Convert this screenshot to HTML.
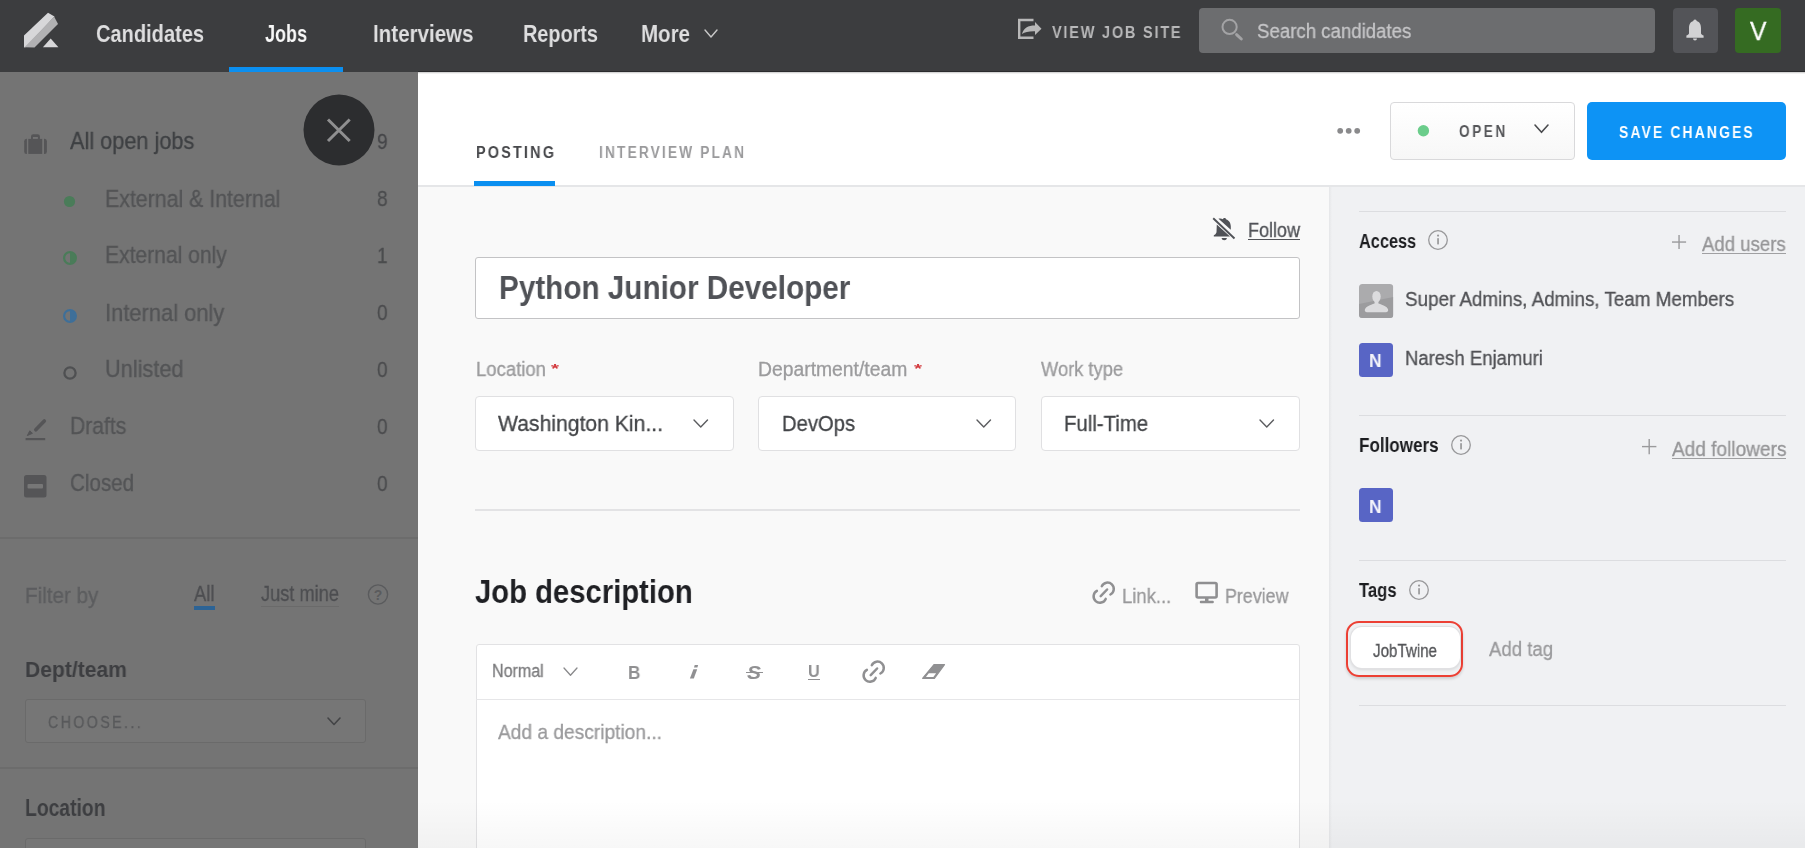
<!DOCTYPE html>
<html><head><meta charset="utf-8"><title>Lever</title>
<style>
html,body{margin:0;padding:0;width:1810px;height:848px;overflow:hidden;background:#fff;}
body{position:relative;font-family:"Liberation Sans",sans-serif;}
.t{position:absolute;white-space:nowrap;line-height:1;transform-origin:0 0;will-change:transform;}
.r{position:absolute;}
svg.r{overflow:visible;}
</style></head><body>
<div class="r" style="left:0px;top:0px;width:1810px;height:848px;background:#ffffff;"></div>
<div class="r" style="left:418px;top:187px;width:911px;height:661px;background:#f9f9f9;"></div>
<div class="r" style="left:1329px;top:187px;width:476px;height:661px;background:#f0f1f3;"></div>
<div class="r" style="left:1329px;top:187px;width:3px;height:661px;background:linear-gradient(to right,#e5e6e8,#f0f1f3);"></div>
<div class="r" style="left:418px;top:185px;width:1387px;height:2px;background:#e5e6e8;"></div>
<div class="r" style="left:0px;top:72px;width:417.5px;height:776px;background:#747474;"></div>
<div class="r" style="left:0px;top:0px;width:1805px;height:72px;background:#3c3d3f;"></div>
<div class="r" style="left:418px;top:71px;width:1387px;height:1px;background:#2a2b2d;"></div>
<div class="r" style="left:417.5px;top:72px;width:1387.5px;height:2px;background:linear-gradient(rgba(0,0,0,0.22),rgba(0,0,0,0));"></div>
<svg class="r" style="left:20px;top:8px;" width="44" height="44" viewBox="0 0 44 44">
<polygon points="4,39.5 4,27.5 28,4.8 34.5,8.5 6,39" fill="#d7d7d9"/>
<polygon points="34.2,8.7 38,16 14.5,39.5 4.5,39.2" fill="#b1b1b3"/>
<polygon points="30.7,30.4 22.9,39.3 38.4,39.3" fill="#d7d7d9"/>
</svg>
<div class="t" id="t0" style="left:95.5px;top:21.7px;font-size:24.71px;color:#dededf;font-weight:700;transform:scaleX(0.8111);">Candidates</div>
<div class="t" id="t1" style="left:265.0px;top:21.7px;font-size:24.71px;color:#f7f7f7;font-weight:700;transform:scaleX(0.7283);">Jobs</div>
<div class="t" id="t2" style="left:373.0px;top:21.7px;font-size:24.71px;color:#dededf;font-weight:700;transform:scaleX(0.8318);">Interviews</div>
<div class="t" id="t3" style="left:522.8px;top:21.7px;font-size:24.71px;color:#dededf;font-weight:700;transform:scaleX(0.8035);">Reports</div>
<div class="t" id="t4" style="left:640.6px;top:21.7px;font-size:24.71px;color:#dededf;font-weight:700;transform:scaleX(0.8301);">More</div>
<svg class="r" style="left:703px;top:27.5px;" width="16" height="11.0" viewBox="0 0 16 11.0"><polyline points="2,2 8.0,9.0 14,2" fill="none" stroke="#c8c8c8" stroke-width="1.4" stroke-linecap="round" stroke-linejoin="round"/></svg>
<div class="r" style="left:229px;top:67px;width:114px;height:5px;background:#0b8ff0;"></div>
<svg class="r" style="left:1016px;top:16px;" width="28" height="26" viewBox="0 0 28 26">
<path d="M17.5,4 H3.2 V21.8 H17.5" fill="none" stroke="#b8b8b8" stroke-width="2.4"/>
<path d="M6,18 C7.5,12 12,9.5 19,9.5 V6 L25.5,12.7 L19,19 V15.2 C13,15 9,16 6,18 Z" fill="#b8b8b8"/>
</svg>
<div class="t" id="t5" style="left:1052.0px;top:24.1px;font-size:16.28px;color:#b9b9ba;font-weight:700;letter-spacing:2px;transform:scaleX(0.8917);">VIEW JOB SITE</div>
<div class="r" style="left:1199px;top:8px;width:456px;height:45px;background:#6c6d6f;border-radius:4px;"></div>
<svg class="r" style="left:1218px;top:15px;" width="30" height="28" viewBox="0 0 30 28"><circle cx="11.6" cy="11.9" r="7.1" fill="none" stroke="#a3a3a5" stroke-width="2"/><line x1="18.6" y1="19.6" x2="23.3" y2="24" stroke="#a3a3a5" stroke-width="3" stroke-linecap="round"/></svg>
<div class="t" id="t6" style="left:1256.6px;top:21.7px;font-size:19.77px;color:#c6c6c8;font-weight:400;-webkit-text-stroke:0.3px #c6c6c8;transform:scaleX(0.9430);">Search candidates</div>
<div class="r" style="left:1673px;top:8px;width:45px;height:45px;background:#535458;border-radius:4px;"></div>
<svg class="r" style="left:1684px;top:18px;" width="22" height="24" viewBox="0 0 22 24"><path d="M11,1.5 C12.3,1.5 12.6,2.5 12.6,3 C16,4 17,7 17,10 V15.5 C17.5,16.5 18.5,17.2 19.6,17.6 V19.8 H2.4 V17.6 C3.5,17.2 4.5,16.5 5,15.5 V10 C5,7 6,4 9.4,3 C9.4,2.5 9.7,1.5 11,1.5 Z" fill="#d2d2d4"/><path d="M9,20.5 A2,2 0 0 0 13,20.5 Z" fill="#d2d2d4"/></svg>
<div class="r" style="left:1735px;top:8px;width:46px;height:45px;background:#356b22;border-radius:4px;"></div>
<div class="t" id="t7" style="left:1749.5px;top:18.0px;font-size:26.16px;color:#ffffff;font-weight:400;-webkit-text-stroke:0.3px #ffffff;transform:scaleX(0.9454);">V</div>
<svg class="r" style="left:18px;top:125px;" width="36" height="35" viewBox="0 0 36 35"><path d="M8.9,13.8 V28.9 H8.5 Q6.2,28.9 6.2,26.4 V16.3 Q6.2,13.8 8.5,13.8 Z" fill="#555557"/><rect x="10.3" y="13.9" width="13.9" height="15" fill="#555557"/><path d="M26,13.8 H26.6 Q28.9,13.8 28.9,16.3 V26.4 Q28.9,28.9 26.6,28.9 H26 Z" fill="#555557"/><path d="M13,14 V11.5 Q13,9.3 15.2,9.3 H19.7 Q21.9,9.3 21.9,11.5 V14 H19.9 V12 H14.9 V14 Z" fill="#555557"/></svg>
<div class="t" id="t8" style="left:69.7px;top:130.3px;font-size:23.26px;color:#3e4043;font-weight:400;-webkit-text-stroke:0.3px #3e4043;transform:scaleX(0.9336);">All open jobs</div>
<div class="t" id="t9" style="left:377.3px;top:130.9px;font-size:22.53px;color:#454649;font-weight:400;-webkit-text-stroke:0.3px #454649;transform:scaleX(0.8459);">9</div>
<div class="t" id="t10" style="left:105.0px;top:187.6px;font-size:23.26px;color:#535456;font-weight:400;-webkit-text-stroke:0.3px #535456;transform:scaleX(0.9170);">External &amp; Internal</div>
<div class="t" id="t11" style="left:377.3px;top:188.2px;font-size:22.53px;color:#4b4c4e;font-weight:400;-webkit-text-stroke:0.3px #4b4c4e;transform:scaleX(0.8459);">8</div>
<div class="t" id="t12" style="left:105.0px;top:243.9px;font-size:23.26px;color:#535456;font-weight:400;-webkit-text-stroke:0.3px #535456;transform:scaleX(0.9062);">External only</div>
<div class="t" id="t13" style="left:377.3px;top:244.5px;font-size:22.53px;color:#4b4c4e;font-weight:400;-webkit-text-stroke:0.3px #4b4c4e;transform:scaleX(0.8459);">1</div>
<div class="t" id="t14" style="left:105.0px;top:301.7px;font-size:23.26px;color:#535456;font-weight:400;-webkit-text-stroke:0.3px #535456;transform:scaleX(0.9418);">Internal only</div>
<div class="t" id="t15" style="left:377.3px;top:302.3px;font-size:22.53px;color:#4b4c4e;font-weight:400;-webkit-text-stroke:0.3px #4b4c4e;transform:scaleX(0.8459);">0</div>
<div class="t" id="t16" style="left:105.0px;top:358.1px;font-size:23.26px;color:#535456;font-weight:400;-webkit-text-stroke:0.3px #535456;transform:scaleX(0.9345);">Unlisted</div>
<div class="t" id="t17" style="left:377.3px;top:358.7px;font-size:22.53px;color:#4b4c4e;font-weight:400;-webkit-text-stroke:0.3px #4b4c4e;transform:scaleX(0.8459);">0</div>
<svg class="r" style="left:62px;top:194px;" width="15" height="15" viewBox="0 0 15 15"><circle cx="7.5" cy="7.5" r="5.6" fill="#4a7c59"/></svg>
<svg class="r" style="left:62px;top:250px;" width="16" height="16" viewBox="0 0 16 16"><circle cx="8" cy="8" r="5.9" fill="none" stroke="#4a7c59" stroke-width="2.2"/><path d="M8,2.1 A5.9,5.9 0 0 1 8,13.9 Z" fill="#4a7c59"/></svg>
<svg class="r" style="left:62px;top:308px;" width="16" height="16" viewBox="0 0 16 16"><circle cx="8" cy="8" r="5.9" fill="none" stroke="#3e6f99" stroke-width="2.2"/><path d="M8,2.1 A5.9,5.9 0 0 1 8,13.9 Z" fill="#3e6f99"/><circle cx="8" cy="8" r="3" fill="#3e6f99" opacity="0"/></svg>
<svg class="r" style="left:62px;top:365px;" width="16" height="16" viewBox="0 0 16 16"><circle cx="8" cy="8" r="5.6" fill="none" stroke="#4f5052" stroke-width="2.3"/></svg>
<div class="t" id="t18" style="left:70.3px;top:415.1px;font-size:23.26px;color:#535456;font-weight:400;-webkit-text-stroke:0.3px #535456;transform:scaleX(0.9062);">Drafts</div>
<div class="t" id="t19" style="left:377.3px;top:415.7px;font-size:22.53px;color:#4b4c4e;font-weight:400;-webkit-text-stroke:0.3px #4b4c4e;transform:scaleX(0.8459);">0</div>
<svg class="r" style="left:23px;top:417px;" width="26" height="25" viewBox="0 0 26 25"><line x1="21.3" y1="4" x2="12.8" y2="12.8" stroke="#555557" stroke-width="3.6" stroke-linecap="round"/><polygon points="4.3,18.6 6.8,13.8 9.4,16.3" fill="#555557" stroke="#555557" stroke-width="1" stroke-linejoin="round"/><rect x="2.6" y="21" width="19.6" height="2.2" fill="#555557"/></svg>
<div class="t" id="t20" style="left:70.3px;top:472.1px;font-size:23.26px;color:#535456;font-weight:400;-webkit-text-stroke:0.3px #535456;transform:scaleX(0.8843);">Closed</div>
<div class="t" id="t21" style="left:377.3px;top:472.7px;font-size:22.53px;color:#4b4c4e;font-weight:400;-webkit-text-stroke:0.3px #4b4c4e;transform:scaleX(0.8459);">0</div>
<svg class="r" style="left:23px;top:474px;" width="25" height="24" viewBox="0 0 25 24"><rect x="1" y="1" width="22.5" height="22.5" rx="2.5" fill="#555557"/><rect x="4.5" y="10" width="15.5" height="4.5" rx="1" fill="#777"/></svg>
<div class="r" style="left:0px;top:537px;width:418px;height:1.5px;background:#6c6c6c;"></div>
<div class="t" id="t22" style="left:25.0px;top:585.2px;font-size:22.53px;color:#5c5d5f;font-weight:400;-webkit-text-stroke:0.3px #5c5d5f;transform:scaleX(0.9166);">Filter by</div>
<div class="t" id="t23" style="left:193.9px;top:582.9px;font-size:22.53px;color:#4d4e51;font-weight:400;-webkit-text-stroke:0.3px #4d4e51;transform:scaleX(0.8190);">All</div>
<div class="r" style="left:193.5px;top:606.3px;width:21.5px;height:3.3px;background:#2c6395;"></div>
<div class="t" id="t24" style="left:260.8px;top:582.9px;font-size:22.53px;color:#4d4e51;font-weight:400;-webkit-text-stroke:0.3px #4d4e51;transform:scaleX(0.8095);">Just mine</div>
<div class="r" style="left:260.8px;top:606.2px;width:78px;height:1px;background:#6a6a6a;"></div>
<svg class="r" style="left:366px;top:583px;" width="24" height="23" viewBox="0 0 24 23"><circle cx="12" cy="11.5" r="9.6" fill="none" stroke="#5a5b5d" stroke-width="1.4"/><text x="12" y="16.5" text-anchor="middle" font-family="Liberation Sans" font-weight="700" font-size="14" fill="#5a5b5d">?</text></svg>
<div class="t" id="t25" style="left:25.0px;top:659.2px;font-size:22.53px;color:#3d3e41;font-weight:700;transform:scaleX(0.9370);">Dept/team</div>
<div class="r" style="left:24.5px;top:698.8px;width:341.5px;height:44px;background:#767676;border:1px solid #6a6a6a;border-radius:3px;box-sizing:border-box;"></div>
<div class="t" id="t26" style="left:47.6px;top:714.3px;font-size:17.15px;color:#58595b;font-weight:400;letter-spacing:3px;-webkit-text-stroke:0.3px #58595b;transform:scaleX(0.8243);">CHOOSE...</div>
<svg class="r" style="left:325.5px;top:716px;" width="16.0" height="10.5" viewBox="0 0 16.0 10.5"><polyline points="2,2 8.0,8.5 14.0,2" fill="none" stroke="#434446" stroke-width="1.6" stroke-linecap="round" stroke-linejoin="round"/></svg>
<div class="r" style="left:0px;top:767px;width:418px;height:1.5px;background:#6c6c6c;"></div>
<div class="t" id="t27" style="left:25.0px;top:796.9px;font-size:23.55px;color:#3d3e41;font-weight:700;transform:scaleX(0.8205);">Location</div>
<div class="r" style="left:24.5px;top:837.6px;width:341.5px;height:30px;background:#767676;border:1px solid #6a6a6a;border-radius:3px;box-sizing:border-box;"></div>
<svg class="r" style="left:303px;top:94px;" width="72" height="72" viewBox="0 0 72 72"><circle cx="36" cy="36" r="35.5" fill="#2c2d2f"/><path d="M25,25.5 L46.7,47 M46.7,25.5 L25,47" stroke="#8f8f90" stroke-width="3"/></svg>
<div class="t" id="t28" style="left:475.8px;top:143.6px;font-size:16.13px;color:#47484b;font-weight:700;letter-spacing:2.5px;transform:scaleX(0.8913);">POSTING</div>
<div class="t" id="t29" style="left:599.3px;top:143.6px;font-size:16.13px;color:#9a9a9c;font-weight:700;letter-spacing:2.5px;transform:scaleX(0.8527);">INTERVIEW PLAN</div>
<div class="r" style="left:474.4px;top:181.3px;width:81px;height:5.2px;background:#0b8ff0;"></div>
<svg class="r" style="left:1336px;top:126px;" width="28" height="10" viewBox="0 0 28 10"><circle cx="4.2" cy="4.8" r="2.9" fill="#8a8a8c"/><circle cx="12.7" cy="4.8" r="2.9" fill="#8a8a8c"/><circle cx="21.2" cy="4.8" r="2.9" fill="#8a8a8c"/></svg>
<div class="r" style="left:1390px;top:101.6px;width:185px;height:58px;background:linear-gradient(#ffffff,#f7f7f7);border:1.3px solid #d9d9db;border-radius:4px;box-sizing:border-box;"></div>
<svg class="r" style="left:1416px;top:124px;" width="14" height="14" viewBox="0 0 14 14"><circle cx="7.4" cy="6.7" r="5.7" fill="#6bcd8b"/></svg>
<div class="t" id="t30" style="left:1458.7px;top:123.6px;font-size:15.99px;color:#555659;font-weight:700;letter-spacing:3px;transform:scaleX(0.8525);">OPEN</div>
<svg class="r" style="left:1532.5px;top:122.5px;" width="17.0" height="11.300000000000011" viewBox="0 0 17.0 11.300000000000011"><polyline points="2,2 8.5,9.300000000000011 15.0,2" fill="none" stroke="#4a4b4e" stroke-width="1.6" stroke-linecap="round" stroke-linejoin="round"/></svg>
<div class="r" style="left:1587px;top:101.7px;width:199px;height:58px;background:#0d93f5;border-radius:5px;"></div>
<div class="t" id="t31" style="left:1619.1px;top:124.4px;font-size:16.42px;color:#ffffff;font-weight:700;letter-spacing:2.5px;transform:scaleX(0.8486);">SAVE CHANGES</div>
<svg class="r" style="left:1210px;top:215px;" width="28" height="28" viewBox="0 0 28 28">
<path d="M14.5,3 C15.5,3 16,3.6 16,4.3 C19.3,5.3 20.8,8.5 20.8,11.5 V14.8 L8.5,3.8 C9.5,3.5 11.5,3.3 13,4.3 C13,3.6 13.5,3 14.5,3 Z" fill="#505257"/>
<path d="M6.8,9.5 L20,21.5 H3.8 V20.3 C5,19.8 6,18.8 6.5,17.3 Z" fill="#505257"/>
<path d="M11.5,23 A2.8,2.8 0 0 0 17,23 Z" fill="#505257"/>
<line x1="3.2" y1="3.2" x2="24.5" y2="23.5" stroke="#505257" stroke-width="1.9"/>
</svg>
<div class="t" id="t32" style="left:1248.0px;top:221.2px;font-size:19.48px;color:#505257;font-weight:400;-webkit-text-stroke:0.3px #505257;transform:scaleX(0.9242);">Follow</div>
<div class="r" style="left:1247.5px;top:239px;width:52.5px;height:1.2px;background:#505257;"></div>
<div class="r" style="left:474.6px;top:257.3px;width:825.4px;height:61.5px;background:#ffffff;border:1.5px solid #c3c3c5;border-radius:3px;box-sizing:border-box;"></div>
<div class="t" id="t33" style="left:498.9px;top:272.3px;font-size:32.85px;color:#505257;font-weight:700;transform:scaleX(0.9041);">Python Junior Developer</div>
<div class="t" id="t34" style="left:475.6px;top:360.1px;font-size:19.33px;color:#9b9b9d;font-weight:400;-webkit-text-stroke:0.3px #9b9b9d;transform:scaleX(0.9579);">Location</div>
<div class="t" id="t35" style="left:551.4px;top:361.7px;font-size:13.08px;color:#d33b3f;font-weight:700;transform:scaleX(1.5706);">*</div>
<div class="t" id="t36" style="left:758.3px;top:360.1px;font-size:19.33px;color:#9b9b9d;font-weight:400;-webkit-text-stroke:0.3px #9b9b9d;transform:scaleX(0.9998);">Department/team</div>
<div class="t" id="t37" style="left:913.9px;top:361.7px;font-size:13.08px;color:#d33b3f;font-weight:700;transform:scaleX(1.5706);">*</div>
<div class="t" id="t38" style="left:1040.8px;top:360.1px;font-size:19.33px;color:#9b9b9d;font-weight:400;-webkit-text-stroke:0.3px #9b9b9d;transform:scaleX(0.9463);">Work type</div>
<div class="r" style="left:475.1px;top:395.6px;width:258.8px;height:55.5px;background:#ffffff;border:1.3px solid #e0e0e2;border-radius:4px;box-sizing:border-box;"></div>
<div class="t" id="t39" style="left:498.4px;top:412.7px;font-size:22.24px;color:#434548;font-weight:400;-webkit-text-stroke:0.3px #434548;transform:scaleX(0.9514);">Washington Kin...</div>
<svg class="r" style="left:691.7px;top:417.8px;" width="17.5" height="11.0" viewBox="0 0 17.5 11.0"><polyline points="2,2 8.75,9.0 15.5,2" fill="none" stroke="#5b5c5f" stroke-width="1.4" stroke-linecap="round" stroke-linejoin="round"/></svg>
<div class="r" style="left:758.3px;top:395.6px;width:258.2px;height:55.5px;background:#ffffff;border:1.3px solid #e0e0e2;border-radius:4px;box-sizing:border-box;"></div>
<div class="t" id="t40" style="left:781.6px;top:412.7px;font-size:22.24px;color:#434548;font-weight:400;-webkit-text-stroke:0.3px #434548;transform:scaleX(0.9100);">DevOps</div>
<svg class="r" style="left:974.7px;top:417.8px;" width="17.5" height="11.0" viewBox="0 0 17.5 11.0"><polyline points="2,2 8.75,9.0 15.5,2" fill="none" stroke="#5b5c5f" stroke-width="1.4" stroke-linecap="round" stroke-linejoin="round"/></svg>
<div class="r" style="left:1040.8px;top:395.6px;width:258.9px;height:55.5px;background:#ffffff;border:1.3px solid #e0e0e2;border-radius:4px;box-sizing:border-box;"></div>
<div class="t" id="t41" style="left:1064.1px;top:412.7px;font-size:22.24px;color:#434548;font-weight:400;-webkit-text-stroke:0.3px #434548;transform:scaleX(0.9158);">Full-Time</div>
<svg class="r" style="left:1257.5px;top:417.8px;" width="17.5" height="11.0" viewBox="0 0 17.5 11.0"><polyline points="2,2 8.75,9.0 15.5,2" fill="none" stroke="#5b5c5f" stroke-width="1.4" stroke-linecap="round" stroke-linejoin="round"/></svg>
<div class="r" style="left:474.5px;top:509px;width:825.5px;height:1.5px;background:#e3e3e5;"></div>
<div class="t" id="t42" style="left:474.8px;top:574.8px;font-size:33.43px;color:#1f2024;font-weight:700;transform:scaleX(0.8748);">Job description</div>
<svg class="r" style="left:1084.7px;top:576.0px;" width="36" height="34" viewBox="0 0 36 34"><path d="M16.8,10.2 A6.3,6.3 0 1 1 25.4,18.5" fill="none" stroke="#909092" stroke-width="2.5" stroke-linecap="round"/><path d="M11.9,14.9 A6.3,6.3 0 1 0 20.7,22.9" fill="none" stroke="#909092" stroke-width="2.5" stroke-linecap="round"/><line x1="15.7" y1="20.2" x2="22.1" y2="13.5" stroke="#909092" stroke-width="2.5" stroke-linecap="round"/></svg>
<div class="t" id="t43" style="left:1121.9px;top:585.8px;font-size:20.35px;color:#98989a;font-weight:400;-webkit-text-stroke:0.3px #98989a;transform:scaleX(0.9082);">Link...</div>
<svg class="r" style="left:1194px;top:580px;" width="26" height="26" viewBox="0 0 26 26"><rect x="2.6" y="3" width="20" height="14.5" rx="1.5" fill="none" stroke="#8f8f91" stroke-width="2.6"/><rect x="11" y="17.5" width="3.5" height="4" fill="#8f8f91"/><rect x="5.8" y="20.8" width="14" height="2.4" rx="1" fill="#8f8f91"/></svg>
<div class="t" id="t44" style="left:1224.6px;top:585.8px;font-size:20.35px;color:#98989a;font-weight:400;-webkit-text-stroke:0.3px #98989a;transform:scaleX(0.8776);">Preview</div>
<div class="r" style="left:475.5px;top:644px;width:824.5px;height:230px;background:#ffffff;border:1.3px solid #e2e2e4;border-radius:3px;box-sizing:border-box;"></div>
<div class="r" style="left:476px;top:699px;width:823px;height:1.3px;background:#e6e6e8;"></div>
<div class="t" id="t45" style="left:492.0px;top:663.0px;font-size:17.88px;color:#7b7b7d;font-weight:400;-webkit-text-stroke:0.3px #7b7b7d;transform:scaleX(0.8982);">Normal</div>
<svg class="r" style="left:561.5px;top:665.5px;" width="17.0" height="11.299999999999955" viewBox="0 0 17.0 11.299999999999955"><polyline points="2,2 8.5,9.299999999999955 15.0,2" fill="none" stroke="#8a8a8c" stroke-width="1.3" stroke-linecap="round" stroke-linejoin="round"/></svg>
<div class="t" id="t46" style="left:628.0px;top:663.9px;font-size:18.31px;color:#909092;font-weight:700;transform:scaleX(0.9381);">B</div>
<svg class="r" style="left:686px;top:664px;" width="14" height="17" viewBox="0 0 14 17"><polygon points="7.4,5.2 11.2,5.2 7.8,14.6 3.9,14.6" fill="#909092"/><polygon points="8.7,1 12.1,1 11.4,3.4 8,3.4" fill="#909092"/></svg>
<div class="t" id="t47" style="left:747.0px;top:664.1px;font-size:18.31px;color:#909092;font-weight:700;transform:scaleX(1.1458);font-style:italic;">S</div>
<div class="r" style="left:745.5px;top:671.6px;width:17.5px;height:1.4px;background:#909092;"></div>
<div class="t" id="t48" style="left:808.0px;top:664.1px;font-size:16.72px;color:#909092;font-weight:700;transform:scaleX(0.9699);">U</div>
<div class="r" style="left:807.8px;top:679px;width:12px;height:1.3px;background:#909092;"></div>
<svg class="r" style="left:855.0px;top:655.0px;" width="36" height="34" viewBox="0 0 36 34"><path d="M16.8,10.2 A6.3,6.3 0 1 1 25.4,18.5" fill="none" stroke="#909092" stroke-width="2.5" stroke-linecap="round"/><path d="M11.9,14.9 A6.3,6.3 0 1 0 20.7,22.9" fill="none" stroke="#909092" stroke-width="2.5" stroke-linecap="round"/><line x1="15.7" y1="20.2" x2="22.1" y2="13.5" stroke="#909092" stroke-width="2.5" stroke-linecap="round"/></svg>
<svg class="r" style="left:915px;top:660px;" width="32" height="22" viewBox="0 0 32 22"><path d="M19,4.6 H29.5 L19.4,18.3 H7.6 Z" fill="#909092" stroke="#909092" stroke-width="1.2" stroke-linejoin="round"/><path d="M13.8,13.3 H21.1 L18.4,16.9 H10.9 Z" fill="#ffffff"/></svg>
<div class="t" id="t49" style="left:497.6px;top:721.8px;font-size:20.06px;color:#9a9a9c;font-weight:400;-webkit-text-stroke:0.3px #9a9a9c;transform:scaleX(0.9556);">Add a description...</div>
<div class="r" style="left:1358.8px;top:210.6px;width:427.2px;height:1.3px;background:#dcdde0;"></div>
<div class="t" id="t50" style="left:1358.8px;top:231.5px;font-size:19.48px;color:#1c1d20;font-weight:700;transform:scaleX(0.8387);">Access</div>
<svg class="r" style="left:1426.6px;top:229.1px;" width="22" height="22" viewBox="0 0 22 22"><circle cx="11" cy="11" r="9.3" fill="none" stroke="#98989a" stroke-width="1.3"/><rect x="10.2" y="9.2" width="1.7" height="6.2" fill="#98989a"/><circle cx="11.05" cy="6.6" r="1.1" fill="#98989a"/></svg>
<svg class="r" style="left:1672.4px;top:235.3px;" width="14.099999999999909" height="14.099999999999994" viewBox="0 0 14.099999999999909 14.099999999999994"><line x1="0" y1="7.049999999999997" x2="14.099999999999909" y2="7.049999999999997" stroke="#9a9a9c" stroke-width="1.4"/><line x1="7.0499999999999545" y1="0" x2="7.0499999999999545" y2="14.099999999999994" stroke="#9a9a9c" stroke-width="1.4"/></svg>
<div class="t" id="t51" style="left:1702.2px;top:234.9px;font-size:19.62px;color:#959597;font-weight:400;-webkit-text-stroke:0.3px #959597;transform:scaleX(0.9479);">Add users</div>
<div class="r" style="left:1702px;top:253px;width:84px;height:1.3px;background:#a0a0a2;"></div>
<svg class="r" style="left:1358.8px;top:283.8px;" width="34.3" height="34" viewBox="0 0 34.3 34"><defs><clipPath id="av"><rect x="0" y="0" width="34.3" height="34" rx="3.5"/></clipPath></defs><g clip-path="url(#av)"><rect width="34.3" height="34" fill="#ababad"/><path d="M0,20 L34.3,13 V34 H0 Z" fill="#9c9c9e"/><ellipse cx="17.5" cy="12.6" rx="4.2" ry="5.7" fill="#dcdcde"/><rect x="15.6" y="15" width="3.8" height="6" fill="#dcdcde"/><path d="M8,28.2 C5,28.2 5,24.5 8.5,22.5 C11,21 13.5,20 15.5,19.5 H19.5 C21.5,20 24,21 26.5,22.5 C30,24.5 30,28.2 27,28.2 Z" fill="#dcdcde"/></g></svg>
<div class="t" id="t52" style="left:1404.8px;top:289.7px;font-size:19.77px;color:#505155;font-weight:400;-webkit-text-stroke:0.3px #505155;transform:scaleX(0.9523);">Super Admins, Admins, Team Members</div>
<div class="r" style="left:1358.8px;top:343px;width:34.3px;height:34px;background:#5865c5;border-radius:3.5px;"></div>
<div class="t" id="t53" style="left:1368.8px;top:352.2px;font-size:18.60px;color:#f4f4fa;font-weight:700;transform:scaleX(0.9377);">N</div>
<div class="t" id="t54" style="left:1404.8px;top:348.7px;font-size:19.77px;color:#505155;font-weight:400;-webkit-text-stroke:0.3px #505155;transform:scaleX(0.9368);">Naresh Enjamuri</div>
<div class="r" style="left:1359px;top:414.7px;width:427px;height:1.3px;background:#dcdde0;"></div>
<div class="t" id="t55" style="left:1359.0px;top:436.4px;font-size:19.48px;color:#1c1d20;font-weight:700;transform:scaleX(0.8759);">Followers</div>
<svg class="r" style="left:1449.7px;top:433.8px;" width="22" height="22" viewBox="0 0 22 22"><circle cx="11" cy="11" r="9.3" fill="none" stroke="#98989a" stroke-width="1.3"/><rect x="10.2" y="9.2" width="1.7" height="6.2" fill="#98989a"/><circle cx="11.05" cy="6.6" r="1.1" fill="#98989a"/></svg>
<svg class="r" style="left:1642px;top:439.4px;" width="14.400000000000091" height="15.200000000000045" viewBox="0 0 14.400000000000091 15.200000000000045"><line x1="0" y1="7.600000000000023" x2="14.400000000000091" y2="7.600000000000023" stroke="#9a9a9c" stroke-width="1.4"/><line x1="7.2000000000000455" y1="0" x2="7.2000000000000455" y2="15.200000000000045" stroke="#9a9a9c" stroke-width="1.4"/></svg>
<div class="t" id="t56" style="left:1671.6px;top:439.6px;font-size:19.62px;color:#959597;font-weight:400;-webkit-text-stroke:0.3px #959597;transform:scaleX(0.9718);">Add followers</div>
<div class="r" style="left:1671.5px;top:457.6px;width:114.5px;height:1.3px;background:#a0a0a2;"></div>
<div class="r" style="left:1359px;top:488.4px;width:34px;height:33.6px;background:#5865c5;border-radius:3.5px;"></div>
<div class="t" id="t57" style="left:1369.0px;top:497.8px;font-size:18.60px;color:#f4f4fa;font-weight:700;transform:scaleX(0.9377);">N</div>
<div class="r" style="left:1359px;top:560.1px;width:427px;height:1.3px;background:#dcdde0;"></div>
<div class="t" id="t58" style="left:1359.4px;top:580.9px;font-size:19.48px;color:#1c1d20;font-weight:700;transform:scaleX(0.8523);">Tags</div>
<svg class="r" style="left:1408.1px;top:579.1px;" width="22" height="22" viewBox="0 0 22 22"><circle cx="11" cy="11" r="9.3" fill="none" stroke="#98989a" stroke-width="1.3"/><rect x="10.2" y="9.2" width="1.7" height="6.2" fill="#98989a"/><circle cx="11.05" cy="6.6" r="1.1" fill="#98989a"/></svg>
<div class="r" style="left:1345.8px;top:621.2px;width:117px;height:55.8px;background:transparent;border:2.1px solid #ec4034;border-radius:13px;box-sizing:border-box;box-shadow:0 2px 3px rgba(0,0,0,0.14);"></div>
<div class="r" style="left:1351px;top:627.4px;width:109px;height:41px;background:#ffffff;border-radius:11px;box-shadow:0 0 0 1px #e1e1e3, 0 1px 3px 1px rgba(0,0,0,0.10);"></div>
<div class="t" id="t59" style="left:1373.2px;top:641.8px;font-size:18.31px;color:#555659;font-weight:400;-webkit-text-stroke:0.3px #555659;transform:scaleX(0.8280);">JobTwine</div>
<div class="t" id="t60" style="left:1489.4px;top:639.9px;font-size:19.77px;color:#9a9a9c;font-weight:400;-webkit-text-stroke:0.3px #9a9a9c;transform:scaleX(0.9392);">Add tag</div>
<div class="r" style="left:1359px;top:705.1px;width:427px;height:1.3px;background:#dcdde0;"></div>
<div class="r" style="left:418px;top:800px;width:1387px;height:48px;background:linear-gradient(rgba(0,0,0,0),rgba(0,0,0,0.03));"></div>
</body></html>
